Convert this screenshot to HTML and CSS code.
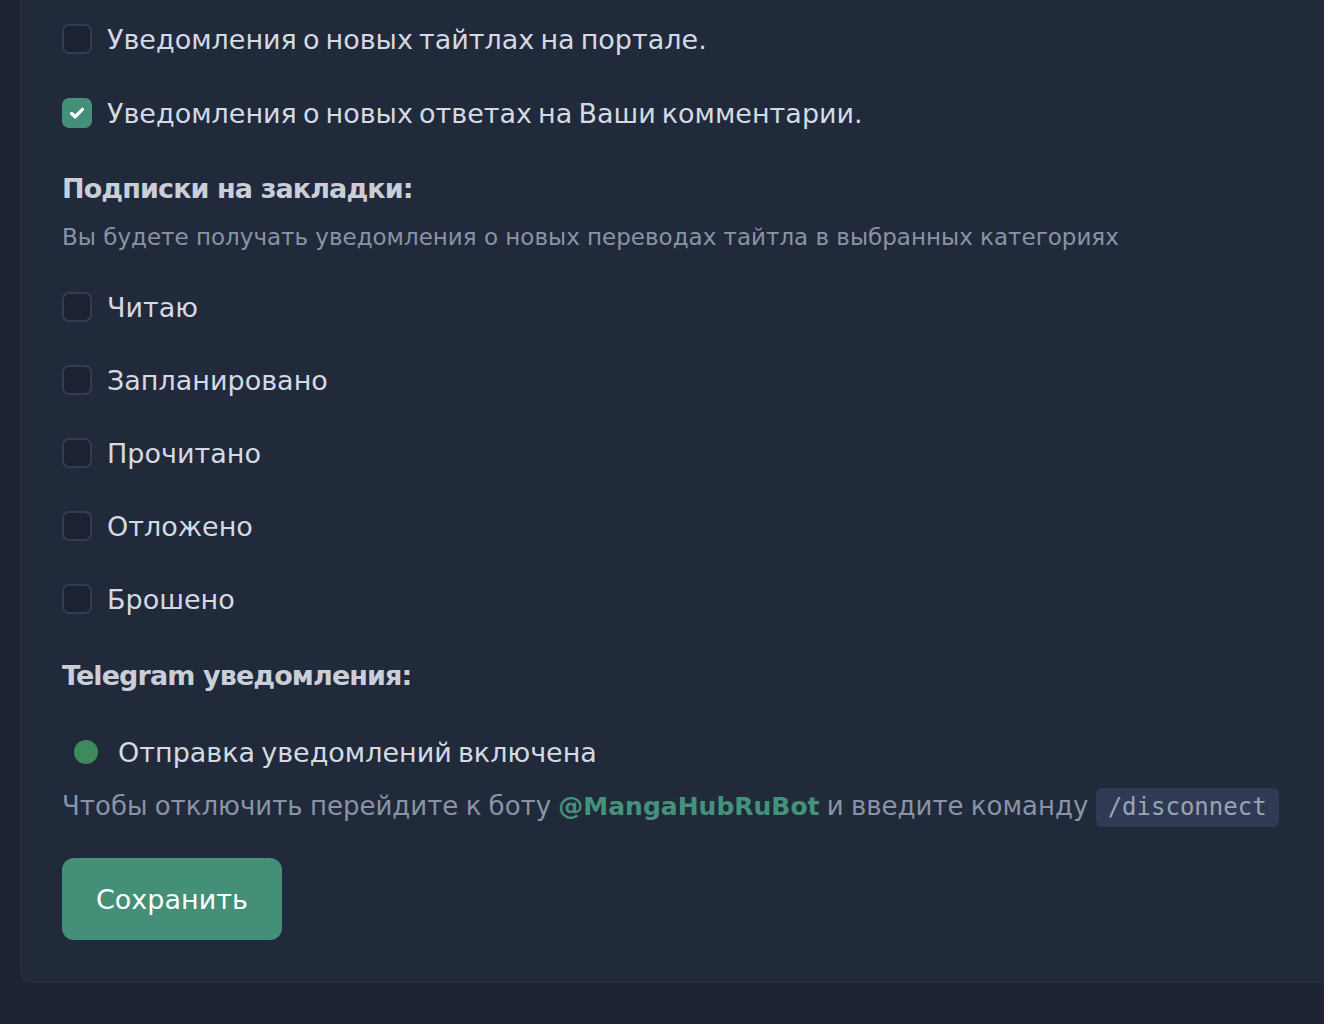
FILE: index.html
```html
<!DOCTYPE html>
<html>
<head>
    <title>Настройки уведомлений</title>
    <link rel="stylesheet" href="styles.css">
</head>
<body>
    <div class="card">
        <label class="check-row">
            <span class="box"></span>
            <span>Уведомления о новых тайтлах на портале.</span>
        </label>
        <label class="check-row">
            <span class="box checked">
                <svg viewBox="0 0 16 16" width="18" height="18"><path d="M3.2 8.4l3.1 3 6.5-6.6" fill="none" stroke="#fff" stroke-width="3" stroke-linecap="round" stroke-linejoin="round"/></svg>
            </span>
            <span>Уведомления о новых ответах на Ваши комментарии.</span>
        </label>

        <h3 class="section-title">Подписки на закладки:</h3>
        <p class="section-desc">Вы будете получать уведомления о новых переводах тайтла в выбранных категориях</p>

        <div class="bookmarks">
            <label class="check-row"><span class="box"></span><span>Читаю</span></label>
            <label class="check-row"><span class="box"></span><span>Запланировано</span></label>
            <label class="check-row"><span class="box"></span><span>Прочитано</span></label>
            <label class="check-row"><span class="box"></span><span>Отложено</span></label>
            <label class="check-row"><span class="box"></span><span>Брошено</span></label>
        </div>

        <h3 class="section-title tg-title">Telegram уведомления:</h3>
        <div class="tg-status">
            <span class="dot"></span>
            <span>Отправка уведомлений включена</span>
        </div>
        <p class="tg-hint">Чтобы отключить перейдите к боту <a href="#">@MangaHubRuBot</a> и введите команду <code>/disconnect</code></p>

        <button class="save">Сохранить</button>
    </div>
</body>
</html>
```

FILE: styles.css
```css
body {
    margin: 0;
    background-color: #1e2333;
    font-family: "DejaVu Sans", Arial, sans-serif;
    color: #d5d9e2;
    overflow: hidden;
}
.card {
    margin: -20px -40px 0 20px;
    padding: 43px 40px 42px 41px;
    background-color: #212a3b;
    border: 1px solid #283244;
    border-radius: 12px;
}
.check-row {
    display: flex;
    align-items: center;
    height: 30px;
    margin-bottom: 44px;
    font-size: 27px;
    word-spacing: -2.5px;
    cursor: pointer;
}
.box {
    box-sizing: border-box;
    flex: none;
    width: 30px;
    height: 30px;
    margin-right: 15px;
    border: 2px solid #323d55;
    border-radius: 7px;
    background-color: #1c2232;
    display: flex;
    align-items: center;
    justify-content: center;
}
.box.checked {
    background-color: #448f78;
    border-color: #448f78;
}
.section-title {
    margin: 0;
    font-size: 27px;
    line-height: 34px;
    font-weight: 600;
    letter-spacing: -0.9px;
    color: #c9ced8;
}
.section-desc {
    margin: 16px 0 40px;
    font-size: 23px;
    line-height: 30px;
    color: #8a93a5;
}
.bookmarks .check-row {
    margin-bottom: 43px;
}
.bookmarks .check-row:last-child {
    margin-bottom: 45px;
}
.tg-status {
    display: flex;
    align-items: center;
    height: 30px;
    margin: 44px 0 0 12px;
    font-size: 27px;
    word-spacing: -2.5px;
}
.dot {
    width: 24px;
    height: 24px;
    margin-right: 20px;
    border-radius: 50%;
    background-color: #3f8a5c;
}
.tg-hint {
    margin: 19px 0 0;
    font-size: 26px;
    line-height: 40px;
    word-spacing: -1px;
    color: #8a93a5;
}
.tg-hint a {
    color: #45927a;
    font-size: 25px;
    font-weight: 700;
    text-decoration: none;
}
.tg-hint code {
    display: inline-block;
    padding: 0 12px;
    border-radius: 6px;
    background-color: #2f3b55;
    color: #9aa3b5;
    font-family: "DejaVu Sans Mono", monospace;
    font-size: 24px;
    line-height: 39px;
}
.save {
    margin-top: 31px;
    height: 82px;
    padding: 0 34px;
    border: none;
    border-radius: 12px;
    background-color: #448f78;
    color: #fff;
    font-family: inherit;
    font-size: 27px;
    cursor: pointer;
}
```
